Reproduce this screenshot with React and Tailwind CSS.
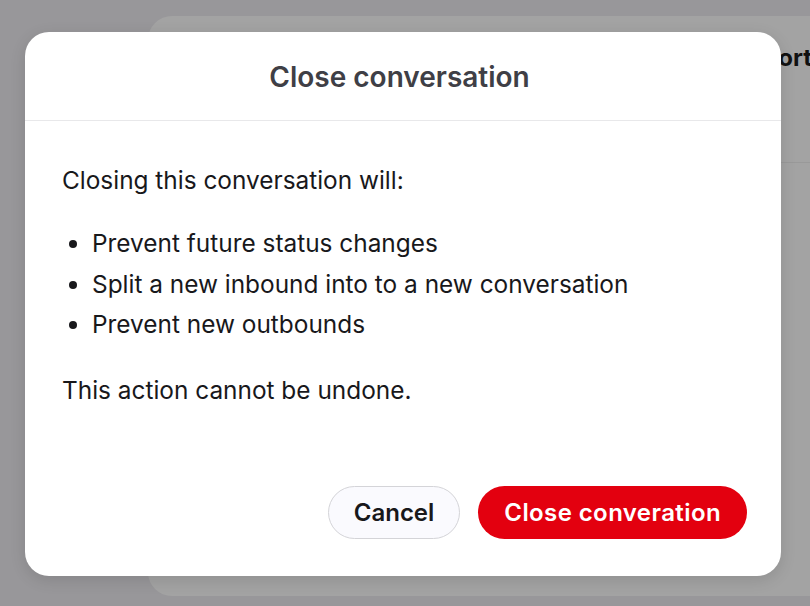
import React from "react";

const items = [
  "Prevent future status changes",
  "Split a new inbound into to a new conversation",
  "Prevent new outbounds",
];

export default function App() {
  return (
    <div
      className="relative h-[606px] w-[810px] overflow-hidden bg-[#98979a]"
      style={{ fontFamily: "Inter, 'Noto Sans', sans-serif" }}
    >
      {/* window behind the overlay */}
      <div className="absolute left-[148px] top-[16px] h-[580px] w-[700px] rounded-[24px] bg-[#a3a3a3]">
        <div className="flex h-[147px] items-start justify-end border-b border-[#999999] pr-[36px] pt-[24px]">
          <span className="text-[24px] font-bold text-[#111111]">Support</span>
        </div>
      </div>

      {/* dialog */}
      <div className="absolute left-[25px] top-[32px] flex h-[544px] w-[756px] flex-col rounded-[24px] bg-white shadow-[0_4px_16px_rgba(0,0,0,0.12)]">
        <div className="flex h-[89px] items-center justify-center border-b border-[#e8e8ea] pr-[7px] pt-[2px]">
          <h2 className="text-[28px] font-semibold text-[#3f3f46]">Close conversation</h2>
        </div>

        <div className="flex-1 px-[37px] pt-[39px] text-[24.4px] leading-[40px] text-[#18181b]">
          <p>Closing this conversation will:</p>
          <ul className="mt-[23px] list-disc pl-[30px]">
            {items.map((item) => (
              <li key={item} className="leading-[40.5px]">
                {item}
              </li>
            ))}
          </ul>
          <p className="mt-[25px]">This action cannot be undone.</p>
        </div>

        <div className="flex justify-end gap-[18px] px-[34px] pb-[37px]">
          <button className="h-[53px] rounded-full border border-[#d4d4d8] bg-[#fafafe] px-[25px] text-[24px] font-semibold text-[#18181b]">
            Cancel
          </button>
          <button className="h-[53px] rounded-full bg-[#e3000f] px-[26px] text-[24px] font-semibold tracking-[0.4px] text-white">
            Close converation
          </button>
        </div>
      </div>
    </div>
  );
}
